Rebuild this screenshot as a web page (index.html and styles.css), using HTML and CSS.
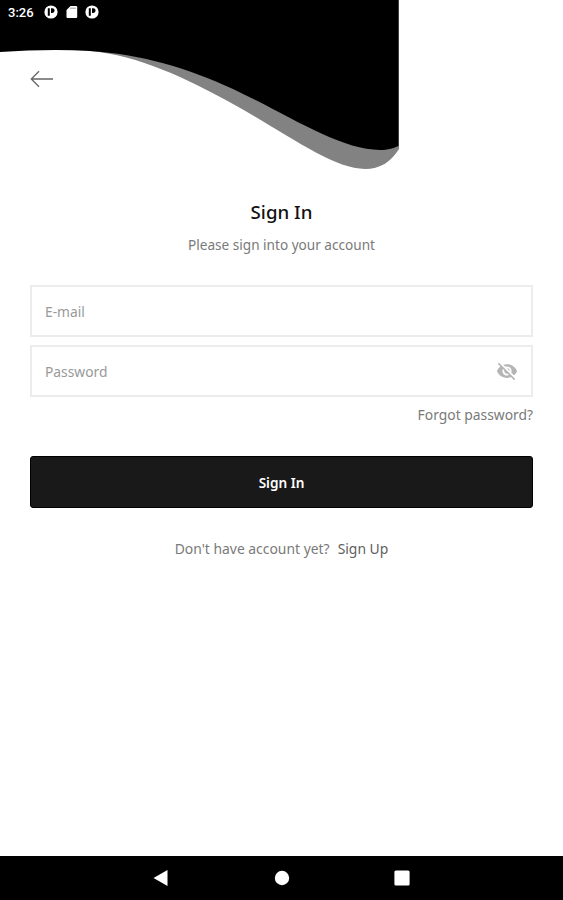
FILE: index.html
```html
<!doctype html>
<html lang="en">
  <head>
    <meta charset="UTF-8" />
    <meta name="viewport" content="width=device-width, initial-scale=1.0" />
    <title>Sign In</title>
    <link rel="stylesheet" href="styles.css" />
  </head>
  <body>
    <div class="screen">
      <svg class="wave" width="400" height="172" viewBox="0 0 400 172">
        <path fill="#828282" d="M0 0H399V149C391 162 380 169 365 169C333 169 287 134 233 104C188 79 138 55 90 51Z" />
        <path fill="#000" d="M0 0H398.5V146C394 148 388 150 380 150C340 150 290 116 233 89C188 68 140 54 90 51C60 49 30 50 0 52Z" />
      </svg>

      <div class="status-bar">
        <span class="time">3:26</span>
        <svg class="status-icon" width="14" height="14" viewBox="0 0 14 14">
          <circle cx="7" cy="7" r="6.6" fill="#fff" />
          <path fill="#000" d="M3.8 3.2H5.8V10.8H3.8ZM7 3.2H8.2A2.4 2.4 0 0 1 8.2 8H7Z" />
        </svg>
        <svg class="status-icon" width="14" height="14" viewBox="0 0 14 14">
          <path fill="#fff" d="M5.5 1H11Q12.2 1 12.2 2.2V12Q12.2 13 11.2 13H2.5Q1.5 13 1.5 12V5Z" />
          <path stroke="#666" stroke-width="0.9" d="M6 2.5v1.5M8 2.5v1.5M10 2.5v1.5" />
        </svg>
        <svg class="status-icon" width="14" height="14" viewBox="0 0 14 14">
          <circle cx="7" cy="7" r="6.6" fill="#fff" />
          <path fill="#000" d="M3.8 3.2H5.8V10.8H3.8ZM7 3.2H8.2A2.4 2.4 0 0 1 8.2 8H7Z" />
        </svg>
      </div>

      <div class="content">
        <a class="back-btn" href="#" aria-label="Back">
          <svg width="24" height="18" viewBox="0 0 24 18" fill="none" stroke="#666" stroke-width="1.3">
            <path d="M23 9H1.5M9 1.3L1.3 9L9 16.7" />
          </svg>
        </a>

        <h1>Sign In</h1>
        <p class="subtitle">Please sign into your account</p>

        <form>
          <div class="field">
            <input class="email" type="email" placeholder="E-mail" />
          </div>
          <div class="field">
            <input type="password" placeholder="Password" />
            <svg width="22" height="22" viewBox="0 0 24 24" fill="#b5b5b5">
              <path d="M12 7c2.76 0 5 2.24 5 5 0 .65-.13 1.26-.36 1.83l2.92 2.92c1.51-1.26 2.7-2.89 3.43-4.75-1.73-4.39-6-7.5-11-7.5-1.4 0-2.74.25-3.98.7l2.16 2.16C10.74 7.13 11.35 7 12 7zM2 4.27l2.28 2.28.46.46C3.08 8.3 1.78 10.02 1 12c1.73 4.39 6 7.5 11 7.5 1.55 0 3.03-.3 4.38-.84l.42.42L19.73 22 21 20.73 3.27 3 2 4.27zM7.53 9.8l1.55 1.55c-.05.21-.08.43-.08.65 0 1.66 1.34 3 3 3 .22 0 .44-.03.65-.08l1.55 1.55c-.67.33-1.41.53-2.2.53-2.76 0-5-2.24-5-5 0-.79.2-1.53.53-2.2zm4.31-.78l3.15 3.15.02-.16c0-1.66-1.34-3-3-3l-.17.01z" />
            </svg>
          </div>
          <a class="forgot" href="#">Forgot password?</a>
          <button type="button" class="signin-btn">Sign In</button>
        </form>

        <p class="signup"><span>Don't have account yet?</span> <a href="#">Sign Up</a></p>
      </div>

      <div class="nav-bar">
        <svg width="18" height="18" viewBox="0 0 18 18"><path fill="#fff" d="M1.5 9L15.5 1V17Z" /></svg>
        <svg width="18" height="18" viewBox="0 0 18 18"><circle cx="9" cy="9" r="7.2" fill="#fff" /></svg>
        <svg width="18" height="18" viewBox="0 0 18 18"><rect x="1.4" y="1.4" width="15.2" height="15.2" rx="1.5" fill="#fff" /></svg>
      </div>
    </div>
  </body>
</html>
```
FILE: styles.css
```css
* {
  box-sizing: border-box;
}

body {
  margin: 0;
  font-family: 'Noto Sans', sans-serif;
  background-color: #fff;
  color: #7a7a7a;
}

a {
  color: inherit;
  text-decoration: none;
}

.screen {
  position: relative;
  display: flex;
  flex-direction: column;
  height: 900px;
  overflow: hidden;
}

/* decorative wave behind the status bar */
.wave {
  position: absolute;
  top: 0;
  left: 0;
  z-index: -1;
}

.status-bar {
  display: flex;
  align-items: center;
  height: 24px;
  padding-left: 8px;
  color: #fff;
}

.time {
  width: 36px;
  font-family: Roboto, sans-serif;
  font-size: 13px;
  font-weight: 500;
}

.status-icon {
  margin-right: 6.5px;
}

.content {
  display: flex;
  flex: 1;
  flex-direction: column;
  padding: 46px 30px 0;
}

.back-btn {
  height: 18px;
}

.back-btn svg {
  display: block;
}

h1 {
  margin: 110px 0 0;
  font-size: 18.7px;
  font-weight: 500;
  line-height: 28px;
  text-align: center;
  color: #111;
}

.subtitle {
  margin: 9px 0 0;
  font-size: 13.6px;
  line-height: 20px;
  text-align: center;
}

form {
  display: flex;
  flex-direction: column;
  margin-top: 30px;
}

.field {
  display: flex;
  align-items: center;
  height: 52px;
  margin-bottom: 8px;
  padding: 0 13px;
  border: 2px solid #ececec;
}

.field input {
  flex: 1;
  padding: 0;
  border: none;
  outline: none;
  background: none;
  font-family: inherit;
  font-size: 13.8px;
}

.field input::placeholder {
  color: #999;
}

.forgot {
  align-self: flex-end;
  font-size: 13.85px;
  line-height: 20px;
}

.signin-btn {
  height: 52px;
  margin-top: 31px;
  border: 1px solid #000;
  border-radius: 3px;
  background-color: #191919;
  color: #fff;
  font-family: inherit;
  font-size: 13.6px;
  font-weight: 600;
}

.signup {
  display: flex;
  justify-content: center;
  gap: 8px;
  margin: 31px 0 0;
  font-size: 13.9px;
  line-height: 20px;
}

.signup a {
  color: #606060;
}

.nav-bar {
  display: flex;
  align-items: center;
  justify-content: center;
  gap: 102.5px;
  height: 44px;
  background-color: #000;
}
```
